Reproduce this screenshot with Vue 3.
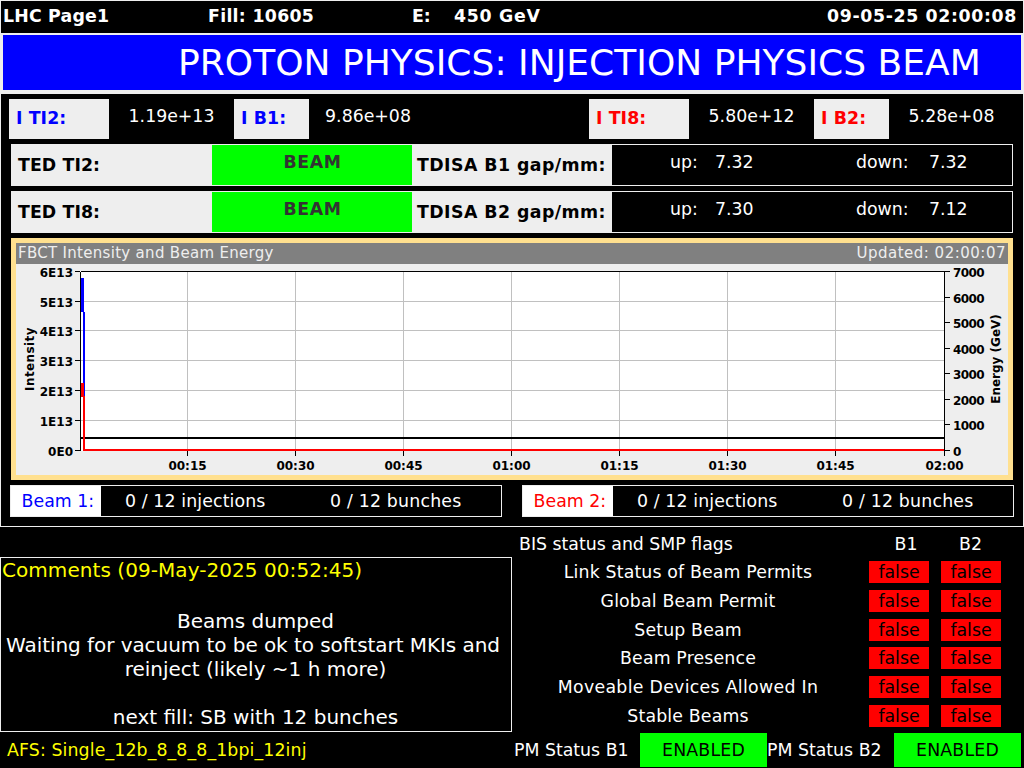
<script setup>
// valeurs de la page LHC
const gaps = [
  { ted: 'TED TI2:', tdisa: 'TDISA B1 gap/mm:', up: '7.32', down: '7.32' },
  { ted: 'TED TI8:', tdisa: 'TDISA B2 gap/mm:', up: '7.30', down: '7.12' },
]
const flags = [
  'Link Status of Beam Permits',
  'Global Beam Permit',
  'Setup Beam',
  'Beam Presence',
  'Moveable Devices Allowed In',
  'Stable Beams',
]
const beams = [
  { label: 'Beam 1:', cls: 'blue' },
  { label: 'Beam 2:', cls: 'red' },
]

// graduations du graphique, en coordonnees de la page
const gridX = [187, 295, 403, 511, 619, 727, 835]
const gridY = [301, 330, 360, 390, 420]
const timeTicks = [
  { x: 187, t: '00:15' },
  { x: 295, t: '00:30' },
  { x: 403, t: '00:45' },
  { x: 511, t: '01:00' },
  { x: 619, t: '01:15' },
  { x: 727, t: '01:30' },
  { x: 835, t: '01:45' },
  { x: 944, t: '02:00' },
]
const leftTicks = [
  { y: 271, t: '6E13' },
  { y: 301, t: '5E13' },
  { y: 330, t: '4E13' },
  { y: 360, t: '3E13' },
  { y: 390, t: '2E13' },
  { y: 420, t: '1E13' },
  { y: 450, t: '0E0' },
]
const rightTicks = [
  { y: 271, t: '7000' },
  { y: 297, t: '6000' },
  { y: 322, t: '5000' },
  { y: 348, t: '4000' },
  { y: 373, t: '3000' },
  { y: 399, t: '2000' },
  { y: 424, t: '1000' },
  { y: 450, t: '0' },
]
</script>

<template>
  <div class="page">
    <header class="topbar">
      <span class="sp-a">LHC Page1</span>
      <span class="sp-b">Fill: 10605</span>
      <span>E:</span>
      <span class="sp-c">450 GeV</span>
      <span class="sp-d">09-05-25 02:00:08</span>
    </header>

    <div class="title-frame">
      <h1 class="title">PROTON PHYSICS: INJECTION PHYSICS BEAM</h1>
    </div>

    <section class="panel">
      <div class="intensities">
        <div class="int-label blue">I TI2:</div>
        <div class="int-value">1.19e+13</div>
        <div class="int-label blue">I B1:</div>
        <div class="int-value">9.86e+08</div>
        <div></div>
        <div class="int-label red">I TI8:</div>
        <div class="int-value">5.80e+12</div>
        <div class="int-label red">I B2:</div>
        <div class="int-value">5.28e+08</div>
      </div>

      <div v-for="g in gaps" :key="g.ted" class="gap-row">
        <div class="ted-label">{{ g.ted }}</div>
        <div class="ted-state"><span>BEAM</span></div>
        <div class="tdisa-label">{{ g.tdisa }}</div>
        <div class="gap-box">
          <span class="gap-up">up:</span>
          <span class="gap-val">{{ g.up }}</span>
          <span class="gap-down">down:</span>
          <span>{{ g.down }}</span>
        </div>
      </div>

      <div class="chart">
        <div class="chart-head">
          <span class="head-left">FBCT Intensity and Beam Energy</span>
          <span class="head-right">Updated: 02:00:07</span>
        </div>
        <svg class="plot" width="992" height="211" viewBox="16 264 992 211">
          <g shape-rendering="crispEdges">
            <rect x="80" y="271" width="864" height="180" fill="#fff" />
            <line v-for="x in gridX" :key="x" :x1="x + 0.5" y1="271" :x2="x + 0.5" y2="451" stroke="#c0c0c0" />
            <line v-for="y in gridY" :key="y" x1="80" :y1="y + 0.5" x2="944" :y2="y + 0.5" stroke="#c0c0c0" />

            <path d="M80.5 271.5H944.5V451M80.5 271.5V451" fill="none" stroke="#000" />
            <line v-for="l in leftTicks" :key="l.t" x1="75" :y1="l.y + 0.5" x2="80" :y2="l.y + 0.5" stroke="#000" />
            <line v-for="r in rightTicks" :key="r.t" x1="945" :y1="r.y + 0.5" x2="950" :y2="r.y + 0.5" stroke="#000" />
            <line v-for="c in timeTicks" :key="c.t" :x1="c.x + 0.5" y1="451" :x2="c.x + 0.5" y2="456" stroke="#000" />

            <line x1="81" y1="438" x2="944" y2="438" stroke="#000" stroke-width="2" />
            <!-- intensite B1 en bleu, B2 en rouge -->
            <rect x="81" y="278" width="3" height="34" fill="#0000ff" />
            <rect x="83" y="312" width="2" height="85" fill="#0000ff" />
            <rect x="81" y="383" width="3" height="14" fill="#ff0000" />
            <rect x="83" y="396" width="2" height="55" fill="#ff0000" />
            <rect x="83" y="449" width="861" height="2" fill="#ff0000" />
          </g>

          <text v-for="l in leftTicks" :key="l.t" x="73" :y="l.y + 6" text-anchor="end" class="tick">{{ l.t }}</text>
          <text v-for="r in rightTicks" :key="r.t" x="953" :y="r.y + 6" class="tick tick-right">{{ r.t }}</text>
          <text v-for="c in timeTicks" :key="c.t" :x="c.x + 0.5" y="470" text-anchor="middle" class="tick">{{ c.t }}</text>
          <text class="tick tick-name" text-anchor="middle" transform="translate(34 359) rotate(-90)">Intensity</text>
          <text class="tick" text-anchor="middle" transform="translate(1000 359) rotate(-90)">Energy (GeV)</text>
        </svg>
      </div>

      <div class="beams">
        <div v-for="b in beams" :key="b.label" class="beam-box">
          <div class="beam-label" :class="b.cls">{{ b.label }}</div>
          <span class="beam-inj">0 / 12 injections</span>
          <span class="beam-bun">0 / 12 bunches</span>
        </div>
      </div>
    </section>

    <div class="lower">
      <div class="left">
        <div class="comments">
          <div class="comments-title">Comments (09-May-2025 00:52:45)</div>
          <div class="comments-text">
            Beams dumped<br />
            <span class="waiting">Waiting for vacuum to be ok to softstart MKIs and</span><br />
            reinject (likely ~1 h more)<br />
            <br />
            next fill: SB with 12 bunches
          </div>
        </div>
        <div class="afs">AFS: Single_12b_8_8_8_1bpi_12inj</div>
      </div>

      <div class="right">
        <div class="flags-head">
          <span class="flags-title">BIS status and SMP flags</span>
          <span class="flags-b1">B1</span>
          <span>B2</span>
        </div>
        <div class="flags">
          <div v-for="f in flags" :key="f" class="flag-row">
            <span class="flag-name" :class="{ wide: f.startsWith('Moveable') }">{{ f }}</span>
            <span class="flag-val">false</span>
            <span class="flag-val">false</span>
          </div>
        </div>
        <div class="pm">
          <span class="pm-label">PM Status B1</span>
          <span class="pm-state">ENABLED</span>
          <span class="pm-label pm-label-2">PM Status B2</span>
          <span class="pm-state">ENABLED</span>
        </div>
      </div>
    </div>
  </div>
</template>

<style>
html, body {
  margin: 0;
  padding: 0;
  background: #000;
}
</style>

<style scoped>
* {
  box-sizing: border-box;
}
.page {
  width: 1024px;
  height: 768px;
  overflow: hidden;
  background: #000;
  color: #fff;
  font-family: "DejaVu Sans", sans-serif;
  font-size: 17.33px;
}
.blue {
  color: #0000ff;
}
.red {
  color: #ff0000;
}

/* --- barre du haut --- */
.topbar {
  display: grid;
  grid-template-columns: 205px 204px 42px 1fr auto;
  align-items: center;
  height: 33px;
  padding: 0 6px 3px 2px;
  border: 1px solid #eee;
  border-bottom: none;
  font-weight: bold;
}
.sp-a {
  letter-spacing: 0.2px;
}
.sp-b {
  letter-spacing: 0.3px;
}
.sp-c {
  letter-spacing: 0.7px;
}
.sp-d {
  letter-spacing: 0.65px;
}
.title-frame {
  background: #eee;
  padding: 2px 3px 3px;
}
.title {
  margin: 0;
  height: 55px;
  padding-left: 175px;
  background: #0000ff;
  color: #fff;
  font-size: 36px;
  font-weight: normal;
  letter-spacing: 0.03px;
  line-height: 55px;
  white-space: nowrap;
}

/* --- panneau principal --- */
.panel {
  height: 434px;
  border: 1px solid #eee;
  padding: 5px 0 0 10px;
}
.intensities {
  display: grid;
  grid-template-columns: 100px 125px 75px 118px 162px 100px 125px 75px 125px;
  height: 40px;
  margin-left: -2px;
}
.int-label {
  background: #eee;
  padding-left: 7px;
  font-weight: bold;
  letter-spacing: 0.1px;
  line-height: 39px;
}
.int-value {
  text-align: center;
  line-height: 34px;
}
.gap-row {
  display: flex;
  width: 1002px;
  height: 42px;
  margin-top: 5px;
  background: #eee;
  color: #000;
  font-weight: bold;
  line-height: 42px;
}
.ted-label {
  width: 201px;
  padding-left: 7px;
  letter-spacing: 0.1px;
}
.ted-state {
  width: 200px;
  margin: 1px 0;
  padding-left: 1px;
  background: #00ff00;
  color: #333;
  text-align: center;
  letter-spacing: 0.6px;
  line-height: 34px;
}
.tdisa-label {
  width: 199px;
  text-align: center;
  letter-spacing: 0.45px;
  white-space: nowrap;
}
.gap-box {
  display: flex;
  flex: 1;
  border: 1px solid #eee;
  background: #000;
  color: #fff;
  font-weight: normal;
  line-height: 34px;
  padding-left: 58px;
}
.gap-up {
  width: 45px;
}
.gap-val {
  width: 141px;
}
.gap-down {
  width: 73px;
}

/* --- graphique --- */
.chart {
  width: 1002px;
  height: 242px;
  margin-top: 5px;
  border: 5px solid #ffe08f;
  background: #eee;
}
.chart-head {
  display: flex;
  justify-content: space-between;
  height: 21px;
  padding: 0 2px;
  background: #808080;
  color: #eee;
  font-size: 15px;
  line-height: 21px;
}
.head-left {
  letter-spacing: 0.3px;
}
.head-right {
  letter-spacing: 0.5px;
}
.plot {
  display: block;
}
.tick {
  font-family: "DejaVu Sans", sans-serif;
  font-size: 12px;
  font-weight: bold;
  fill: #000;
}
.tick-right {
  letter-spacing: -0.6px;
}
.tick-name {
  letter-spacing: 0.4px;
}

/* --- injections --- */
.beams {
  display: flex;
  gap: 20px;
  margin: 5px 0 0 -1px;
}
.beam-box {
  display: flex;
  width: 492px;
  height: 32px;
  border: 1px solid #eee;
  line-height: 30px;
}
.beam-label {
  width: 90px;
  background: #fff;
  text-align: right;
  padding-right: 7px;
}
.beam-inj {
  width: 205px;
  margin-left: 24px;
  letter-spacing: 0.12px;
}
.beam-bun {
  letter-spacing: 0.2px;
}

/* --- partie basse --- */
.lower {
  display: flex;
}
.left {
  width: 512px;
  padding-top: 30px;
}
.comments {
  height: 175px;
  border: 1px solid #eee;
  font-size: 20px;
}
.comments-title {
  padding-left: 1px;
  color: #ffff00;
  letter-spacing: 0.06px;
  line-height: 24px;
}
.comments-text {
  margin-top: 27px;
  padding-right: 1px;
  text-align: center;
  line-height: 24px;
  white-space: nowrap;
}
.waiting {
  padding-right: 5px;
  letter-spacing: -0.06px;
}
.afs {
  padding: 6px 0 0 7px;
  color: #ffff00;
  letter-spacing: 0.12px;
  line-height: 24px;
}
.right {
  width: 512px;
}
.flags-head {
  display: flex;
  height: 34px;
  padding: 5px 0 0 7px;
  line-height: 24px;
}
.flags-title {
  width: 350px;
}
.flags-b1 {
  width: 90px;
  padding-left: 25.5px;
}
.flags {
  display: flex;
  flex-direction: column;
  gap: 6.8px;
}
.flag-row {
  display: grid;
  grid-template-columns: 345px 60px 60px;
  column-gap: 12px;
  height: 22px;
  line-height: 22px;
}
.flag-name {
  margin-right: -7px;
  text-align: center;
  letter-spacing: 0.15px;
}
.flag-name.wide {
  letter-spacing: 0.3px;
}
.flag-val {
  background: #ff0000;
  color: #000;
  text-align: center;
}
.pm {
  display: flex;
  height: 34px;
  margin-top: 6px;
  padding-left: 2px;
  line-height: 34px;
}
.pm-label {
  width: 126px;
  white-space: nowrap;
}
.pm-label-2 {
  width: 127px;
}
.pm-state {
  width: 127px;
  background: #00ff00;
  color: #000;
  text-align: center;
  letter-spacing: 0.2px;
}
</style>
